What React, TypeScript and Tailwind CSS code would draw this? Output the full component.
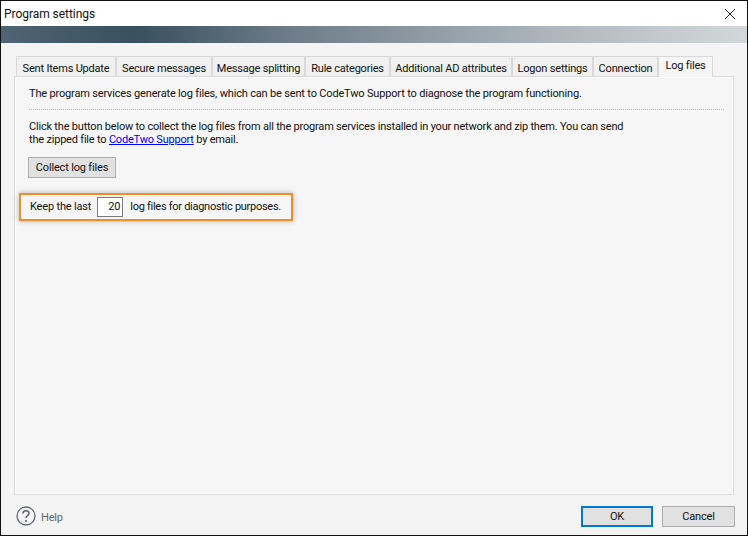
import React from "react";

const tabs: { label: string; w: string }[] = [
  { label: "Sent Items Update", w: "w-[100px]" },
  { label: "Secure messages", w: "w-[96px]" },
  { label: "Message splitting", w: "w-[93px]" },
  { label: "Rule categories", w: "w-[85px]" },
  { label: "Additional AD attributes", w: "w-[122px]" },
  { label: "Logon settings", w: "w-[81px]" },
  { label: "Connection", w: "w-[65px]" },
];

export default function App() {
  return (
    <div className="w-[748px] h-[536px] bg-[#f4f4f4] border border-[#111] flex flex-col overflow-hidden text-[11px] leading-[16px] tracking-[-0.17px] text-[#111] font-['Roboto','Liberation_Sans',sans-serif]">
      <div className="h-[25px] shrink-0 bg-white flex items-center justify-between pl-[3px] pr-[11px]">
        <span className="text-[12px] tracking-[-0.05px]">Program settings</span>
        <svg width="12" height="12" viewBox="0 0 12 12" className="text-[#222]">
          <path d="M1 1 L11 11 M11 1 L1 11" stroke="currentColor" strokeWidth="1" fill="none" />
        </svg>
      </div>
      <div className="h-[17px] shrink-0 bg-[linear-gradient(90deg,#4f6474_0%,#38505f_18%,#6c7b87_38%,#8b98a2_55%,#b0b8be_75%,#d3d7d9_100%)]" />
      <div className="flex-1 flex flex-col px-[13px] pt-[13px] min-h-0">
        <div className="flex pl-[2px] h-[20px] items-end relative z-10 tracking-[-0.2px]">
          {tabs.map((t) => (
            <div key={t.label} className={`${t.w} h-[20px] shrink-0 bg-[#f0f0f0] border border-b-0 border-[#d9d9d9] flex items-center justify-center pt-[4px] whitespace-nowrap`}>
              {t.label}
            </div>
          ))}
          <div className="w-[55px] h-[21px] shrink-0 bg-[#f6f6f6] border border-b-0 border-[#d9d9d9] flex items-start pt-[1px] justify-center whitespace-nowrap -mb-px">
            Log files
          </div>
        </div>
        <div className="flex-1 bg-[#f6f6f6] border border-[#d9d9d9] shadow-[inset_0_0_0_1px_#ffffff] px-[14px] pt-[9px]">
          <p>The program services generate log files, which can be sent to CodeTwo Support to diagnose the program functioning.</p>
          <div className="mt-[7px] border-t border-dotted border-[#bdbdbd] w-[695px]" />
          <p className="mt-[10px] w-[610px] leading-[13px] tracking-[-0.2px]">
            Click the button below to collect the log files from all the program services installed in your network and zip them. You can send the zipped file to{" "}
            <span className="text-[#0000ff] underline">CodeTwo Support</span> by email.
          </p>
          <button className="mt-[11px] -ml-[1px] block w-[88px] h-[21px] bg-[#e1e1e1] border border-[#adadad] text-center leading-[20px]">Collect log files</button>
          <div className="mt-[15px] -ml-[10px] w-[274px] h-[28px] border-2 border-[#f28c28] shadow-[0_0_6px_rgba(0,0,0,0.25)] bg-[#f6f6f6] flex items-center pl-[9px] whitespace-nowrap">
            <span>Keep the last</span>
            <div className="ml-[6px] w-[26px] h-[20px] bg-white border border-[#7a7a7a] text-right pr-[2px] leading-[18px]">20</div>
            <span className="ml-[7px] tracking-[-0.28px]">log files for diagnostic purposes.</span>
          </div>
        </div>
        <div className="h-[40px] shrink-0 flex items-start pt-[11px]">
          <div className="flex items-center gap-[6px] pl-[2px] text-[#5f6770]">
            <svg width="20" height="20" viewBox="0 0 20 20" fill="none">
              <circle cx="10" cy="10" r="9" stroke="#5f6770" strokeWidth="1.3" />
              <path d="M7 7.5c0-1.8 1.4-2.8 3-2.8s3 1 3 2.6c0 2.4-3 2.4-3 4.8" stroke="#5f6770" strokeWidth="1.6" fill="none" />
              <circle cx="10" cy="15" r="1.1" fill="#5f6770" />
            </svg>
            <span className="pt-[3px] -ml-[1px]">Help</span>
          </div>
          <div className="ml-auto flex gap-[9px] -mr-[1px]">
            <button className="w-[72px] h-[21px] bg-[#e1e1e1] border-2 border-[#0078d7] text-center leading-[17px]">OK</button>
            <button className="w-[73px] h-[21px] bg-[#e1e1e1] border border-[#adadad] text-center leading-[19px]">Cancel</button>
          </div>
        </div>
      </div>
    </div>
  );
}
